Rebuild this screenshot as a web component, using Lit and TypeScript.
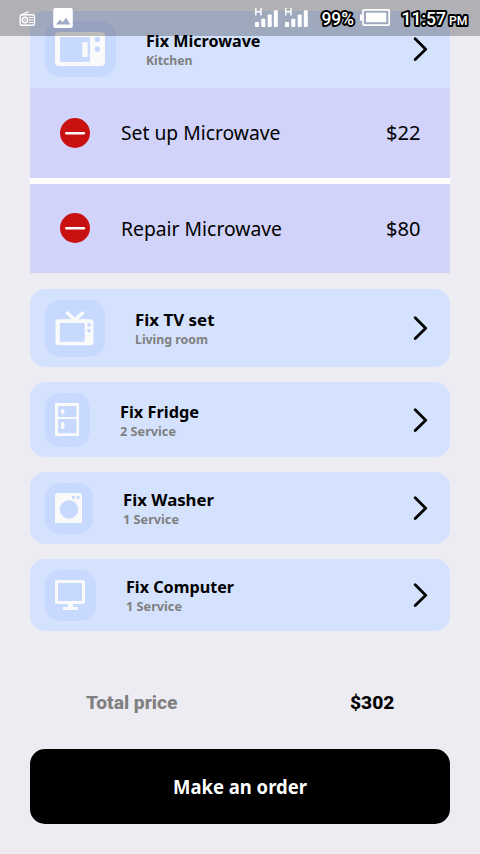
import { LitElement, html, svg, css, TemplateResult } from "lit";
import { customElement, property } from "lit/decorators.js";

/** One line of text set to an exact measure. */
@customElement("fit-text")
class FitText extends LitElement {
  @property() text = "";
  @property({ type: Number }) measure = 0;
  @property({ type: Number }) size = 16;

  static styles = css`
    :host { display: block; }
    svg { display: block; overflow: visible; fill: currentColor; }
  `;

  render() {
    return html`<svg width=${this.measure} height=${this.size}>
      <text x="0" y=${this.size * 0.86} font-size=${this.size}
        textLength=${this.measure} lengthAdjust="spacingAndGlyphs">${this.text}</text>
    </svg>`;
  }
}

const microwave = svg`
  <rect x="0" y="0" width="50" height="34" rx="4" fill="#fafafa"/>
  <rect x="5" y="5" width="30" height="25" rx="1" fill="#c8d9ff"/>
  <rect x="27.3" y="10" width="5.4" height="15" rx="1" fill="#fafafa"/>
  <circle cx="42.3" cy="7.5" r="2.7" fill="#c8d9ff"/>
  <circle cx="42.3" cy="17.3" r="2.7" fill="#c8d9ff"/>`;

const tv = svg`
  <path d="M12.5 2 L20 9 L27.5 2" fill="none" stroke="#fafafa" stroke-width="3.4" stroke-linecap="round"/>
  <rect x="0.5" y="8.3" width="38" height="26" rx="3" fill="#fafafa"/>
  <rect x="4.8" y="12" width="25" height="18.8" rx="1" fill="#c8d9ff"/>
  <circle cx="34" cy="13.8" r="1.9" fill="#c8d9ff"/>
  <circle cx="34" cy="19.6" r="1.9" fill="#c8d9ff"/>`;

const fridge = svg`
  <rect width="24" height="33" fill="#fafafa"/>
  <rect x="3" y="3" width="18.5" height="11" rx="1" fill="#c8d9ff"/>
  <rect x="3" y="16" width="18.5" height="14.2" rx="1" fill="#c8d9ff"/>
  <rect x="6" y="6.2" width="3.4" height="4.6" rx="1" fill="#fafafa"/>
  <rect x="6" y="19" width="3.4" height="7" rx="1" fill="#fafafa"/>`;

const washer = svg`
  <path d="M3 0H24Q27 0 27 3V30H0V3Q0 0 3 0Z" fill="#fafafa"/>
  <circle cx="14" cy="16.5" r="9.2" fill="#c8d9ff"/>
  <rect x="17" y="3" width="3" height="3" rx=".8" fill="#c8d9ff"/>
  <rect x="21.7" y="3" width="3" height="3" rx=".8" fill="#c8d9ff"/>`;

const computer = svg`
  <path d="M2 0H28Q30 0 30 2V22Q30 24 28 24H18V27H23V30H8V27H13V24H2Q0 24 0 22V2Q0 0 2 0Z" fill="#fafafa"/>
  <rect x="3" y="3" width="24" height="18" rx=".6" fill="#c8d9ff"/>`;

interface Job {
  kind: string;
  title: string;
  titleWidth: number;
  sub: string;
  subWidth: number;
  icon: TemplateResult<2>;
  w: number;
  h: number;
}

const jobs: Job[] = [
  { kind: "microwave", title: "Fix Microwave", titleWidth: 114.5, sub: "Kitchen", subWidth: 46.5, icon: microwave, w: 50, h: 34 },
  { kind: "tv", title: "Fix TV set", titleWidth: 79.5, sub: "Living room", subWidth: 73, icon: tv, w: 40, h: 36 },
  { kind: "fridge", title: "Fix Fridge", titleWidth: 79, sub: "2 Service", subWidth: 56, icon: fridge, w: 25, h: 33 },
  { kind: "washer", title: "Fix Washer", titleWidth: 91, sub: "1 Service", subWidth: 56, icon: washer, w: 28, h: 30 },
  { kind: "computer", title: "Fix Computer", titleWidth: 108, sub: "1 Service", subWidth: 56, icon: computer, w: 31, h: 30 },
];

const services = [
  { name: "Set up Microwave", width: 159.5, price: "$22" },
  { name: "Repair Microwave", width: 161, price: "$80" },
];

@customElement("app-root")
class AppRoot extends LitElement {
  static styles = css`
    :host {
      display: block;
      position: relative;
      box-sizing: border-box;
      width: 480px;
      height: 854px;
      padding: 11px 30px 0;
      overflow: hidden;
      background: #edecf2;
      color: #000;
      font-family: "Noto Sans", "Open Sans", sans-serif;
    }
    svg { display: block; flex: none; }
    .status { position: absolute; inset: 0 0 auto; height: 36px; background: rgba(0, 0, 0, 0.25); }
    .status text { font-family: Roboto, sans-serif; font-weight: 500; fill: #fff; }
    .status .outlined { stroke: #000; stroke-width: 4px; stroke-linejoin: round; paint-order: stroke; }
    .card {
      box-sizing: border-box;
      display: flex;
      align-items: center;
      margin-bottom: 15px;
      padding: 0 22px 0 15px;
      border-radius: 15px;
      background: #d5e2fe;
    }
    .tile {
      box-sizing: border-box;
      flex: none;
      padding: 10px;
      margin-right: 30px;
      border-radius: 15px;
      background: #c8d9ff;
    }
    .microwave { height: 77px; margin-bottom: 0; padding-bottom: 1px; border-radius: 15px 15px 0 0; }
    .microwave .tile { width: 70.5px; height: 56px; }
    .microwave .tile svg { margin-top: .5px; }
    .tv { height: 78px; }
    .tv .tile { width: 60px; height: 57px; }
    .tv .tile svg { margin-top: 1px; }
    .fridge { height: 75px; }
    .fridge .tile { width: 45px; height: 54px; }
    .washer { height: 72px; }
    .washer .tile { width: 48px; height: 51px; }
    .computer { height: 72px; margin-bottom: 0; }
    .computer .tile { width: 51px; height: 51px; }
    .label { flex: 1; display: grid; gap: 5px; margin-top: 2px; }
    .title { font-weight: 700; }
    .sub { font-weight: 700; color: #808080; }
    .services { display: grid; gap: 6px; margin-bottom: 16px; background: #fff; }
    .service {
      box-sizing: border-box;
      height: 89.5px;
      display: flex;
      align-items: center;
      padding: 0 30px;
      background: #d2d3fa;
    }
    .service fit-text { padding-top: 2px; }
    .name { flex: 1; margin-left: 30.5px; }
    .total {
      display: flex;
      justify-content: space-between;
      height: 18px;
      margin: 62px 56px 38px;
      font-family: Roboto, sans-serif;
      font-weight: 800;
    }
    .caption { color: #808080; }
    .order {
      display: grid;
      place-items: center;
      box-sizing: border-box;
      width: 420px;
      height: 75px;
      padding: 2px 0 0;
      border: 0;
      border-radius: 15px;
      background: #000;
      color: #fff;
      font: 700 19px "Noto Sans", sans-serif;
    }
  `;

  private card(j: Job) {
    return html`<div class="card ${j.kind}">
      <div class="tile"><svg width=${j.w} height=${j.h}>${j.icon}</svg></div>
      <div class="label">
        <fit-text class="title" text=${j.title} measure=${j.titleWidth} size="16"></fit-text>
        <fit-text class="sub" text=${j.sub} measure=${j.subWidth} size="12.8"></fit-text>
      </div>
      <svg width="15" height="24" fill="none" stroke="#000" stroke-width="2.8" stroke-linecap="round" stroke-linejoin="round">
        <path d="M2.2 1.8L12.7 12.2L2.2 22.4"/>
      </svg>
    </div>`;
  }

  private signal(x: number) {
    return svg`<g transform="translate(${x} 0)" fill="#fff">
      <path d="M.8 8V15.5M6 8V15.5M.8 11.8H6" fill="none" stroke="#fff" stroke-width="1.4"/>
      <rect x="0" y="22" width="4" height="5" rx=".7"/>
      <rect x="6.3" y="18.7" width="4" height="8.3" rx=".7"/>
      <rect x="12.7" y="14.5" width="4" height="12.5" rx=".7"/>
      <rect x="18.8" y="10.3" width="4" height="16.7" rx=".7"/>
    </g>`;
  }

  render() {
    return html`
      ${this.card(jobs[0])}
      <div class="services">
        ${services.map((s) => html`<div class="service">
          <svg width="30" height="30"><circle cx="15" cy="15" r="15" fill="#ca1111"/>
            <path d="M6.4 15.3H23.8" stroke="#fff" stroke-width="2.6" stroke-linecap="round"/></svg>
          <fit-text class="name" text=${s.name} measure=${s.width} size="19"></fit-text>
          <fit-text text=${s.price} measure="34.5" size="19"></fit-text>
        </div>`)}
      </div>
      ${jobs.slice(1).map((j) => this.card(j))}
      <div class="total">
        <fit-text class="caption" text="Total price" measure="91.5" size="18.5"></fit-text>
        <fit-text text="$302" measure="44.5" size="18.5"></fit-text>
      </div>
      <button class="order"><fit-text text="Make an order" measure="134" size="19"></fit-text></button>
      <div class="status">
        <svg width="480" height="36">
          <path d="M21 15L28.5 11.7" stroke="#fff" stroke-width="1.3"/>
          <rect x="20.2" y="14.8" width="14.2" height="10.4" rx="1.8" fill="none" stroke="#fff" stroke-width="1.4"/>
          <circle cx="25" cy="20" r="2.7" fill="none" stroke="#fff" stroke-width="1.4"/>
          <circle cx="25" cy="20" r=".8" fill="#fff"/>
          <path d="M29 17.5H33M29 20H33M29 22.5H33" stroke="#fff" stroke-width="1.1"/>
          <rect x="53.2" y="8" width="19.6" height="20" rx="2" fill="#fff"/>
          <path d="M56 24.5L60 19.5L62.7 22.3L66 17.8L70.5 24.5Z" fill="#9facc5"/>
          ${this.signal(255)}${this.signal(285)}
          <text class="outlined" x="321.5" y="25" font-size="17.5" textLength="32.5" lengthAdjust="spacingAndGlyphs">99%</text>
          <rect x="363" y="9.8" width="26.2" height="15.3" rx="1" fill="none" stroke="#fff" stroke-width="1.7"/>
          <rect x="366" y="12.7" width="20.2" height="9.5" fill="#fff"/>
          <rect x="360" y="14.2" width="2.5" height="6.6" rx=".6" fill="#fff"/>
          <text class="outlined" x="401.5" y="25" font-size="17.5" textLength="44.5" lengthAdjust="spacingAndGlyphs">11:57</text>
          <text class="outlined" x="449" y="25" font-size="12.5" textLength="18.5" lengthAdjust="spacingAndGlyphs">PM</text>
        </svg>
      </div>`;
  }
}
